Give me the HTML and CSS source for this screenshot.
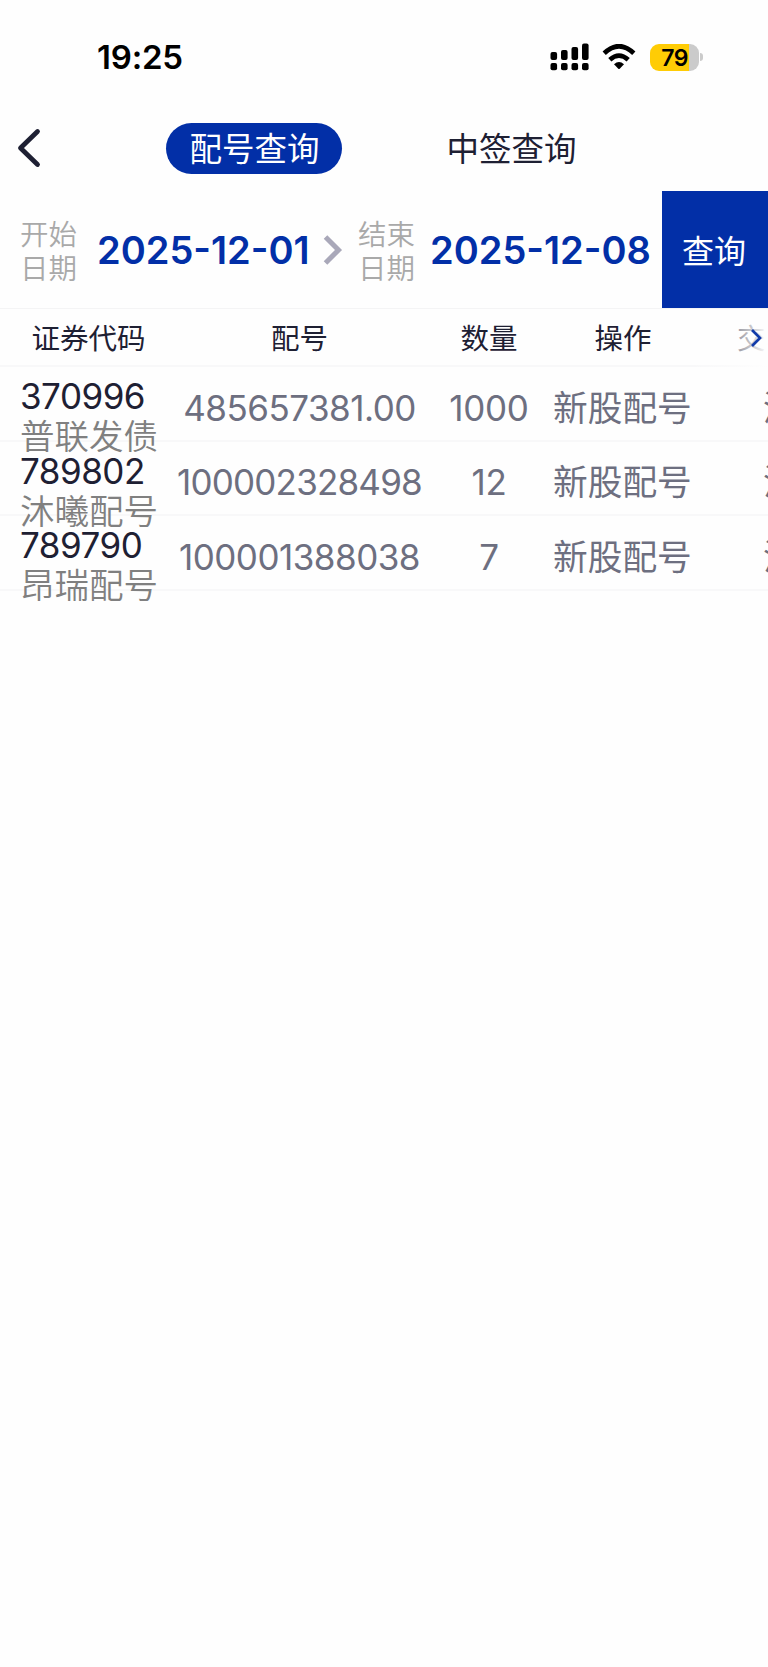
FILE: index.html
```html
<!DOCTYPE html>
<html lang="zh-CN">
<head>
<meta charset="utf-8">
<title>配号查询</title>
<link rel="stylesheet" href="styles.css">
</head>
<body>
<div class="status">
  <span class="time">19:25</span>
  <div class="status-icons">
    <svg class="signal" width="39" height="28" viewBox="0 0 39 28">
      <rect x="0.5" y="9" width="6.6" height="8" rx="2"/><rect x="11" y="7" width="6.6" height="10" rx="2"/><rect x="21.5" y="4" width="6.6" height="13" rx="2"/><rect x="32" y="0.5" width="6.6" height="16.5" rx="2"/>
      <rect x="0.5" y="20" width="6.6" height="7.3" rx="2"/><rect x="11" y="20" width="6.6" height="7.3" rx="2"/><rect x="21.5" y="20" width="6.6" height="7.3" rx="2"/><rect x="32" y="20" width="6.6" height="7.3" rx="2"/>
    </svg>
    <svg class="wifi" width="34" height="26" viewBox="0 0 34 26">
      <path d="M2.2 9.3Q17-4.8 31.800 9.300" fill="none" stroke="#000" stroke-width="4.700"/>
      <path d="M7.800 15.800Q17 7.500 26.200 15.800" fill="none" stroke="#000" stroke-width="4.700"/>
      <path d="M12 20.200Q17 15.800 22 20.200L17.700 24.800Q17 25.400 16.300 24.800Z"/>
    </svg>
    <div class="battery"><span>79</span></div>
    <i class="battery-tip"></i>
  </div>
</div>
<nav class="nav">
  <svg class="back" width="24" height="40" viewBox="0 0 24 40"><path d="M20.500 3.500L3.500 20L20.500 36.500" fill="none" stroke="#1e2033" stroke-width="4.800" stroke-linecap="round" stroke-linejoin="round"/></svg>
  <span class="tab active">配号查询</span>
  <span class="tab">中签查询</span>
</nav>
<div class="filter">
  <div class="label start">开始<br>日期</div>
  <div class="date from">2025-12-01</div>
  <svg class="arrow" width="20" height="30" viewBox="0 0 20 30"><path d="M2.500 2L15.500 15L2.500 28" fill="none" stroke="#a9a8b9" stroke-width="5"/></svg>
  <div class="label end">结束<br>日期</div>
  <div class="date to">2025-12-08</div>
  <button class="query">查询</button>
</div>
<main class="table">
  <div class="row head"><div>证券代码</div><div>配号</div><div>数量</div><div>操作</div><div>交易市场</div>
    <div class="more"><svg width="12" height="22" viewBox="0 0 12 22"><path d="M2 3L10 11L2 19" fill="none" stroke="#123ba9" stroke-width="2.700"/></svg></div>
  </div>
  <div class="row"><div class="security"><b>370996</b><span>普联发债</span></div><div class="amount">485657381.00</div><div>1000</div><div class="op">新股配号</div><div class="market">深市</div></div>
  <div class="row"><div class="security"><b>789802</b><span>沐曦配号</span></div><div class="number">100002328498</div><div>12</div><div class="op">新股配号</div><div class="market">沪市</div></div>
  <div class="row"><div class="security"><b>789790</b><span>昂瑞配号</span></div><div class="amount">100001388038</div><div>7</div><div class="op">新股配号</div><div class="market">沪市</div></div>
</main>
</body>
</html>
```
FILE: styles.css
```css
* { box-sizing: border-box; }
body { margin: 0; width: 768px; min-height: 1667px; background: #fefefe; color: #1e2033; font-family: Inter, "Noto Sans CJK SC", sans-serif; overflow-x: hidden; }
.status { height: 114px; display: flex; justify-content: space-between; padding: 37px 65px 0 97px; color: #000; }
.time { font-size: 33px; line-height: 41px; font-weight: 600; letter-spacing: -.2px; }
.status-icons { display: flex; height: 40px; align-items: center; }
.signal { margin-right: 13px; }
.wifi { margin-right: 14px; }
.battery { width: 49px; height: 27px; border-radius: 9px; background: linear-gradient(90deg, #ffcc05 39px, #cbcbcb 39px); font-size: 23px; font-weight: 600; line-height: 28px; text-align: center; letter-spacing: -.5px; }
.battery-tip { width: 3px; height: 8px; margin-left: 1px; border-radius: 0 3px 3px 0; background: #cbcbcb; }
.nav { height: 77px; display: flex; align-items: center; padding: 0 0 9px 17px; }
.tab { width: 176px; height: 51px; border-radius: 26px; font-size: 32.500px; line-height: 51px; padding-top: 1.500px; padding-left: 1px; text-align: center; }
.back { margin-right: 125px; }
.active { background: #022fa7; color: #fff; margin-right: 81px; }
.filter { height: 118px; display: flex; align-items: center; padding-left: 20px; border-bottom: 1px solid #f4f4f5; }
.label { width: 58px; padding-top: 5px; font-size: 28.500px; line-height: 34px; color: #a9a9a9; font-weight: 350; }
.date { font-size: 38px; font-weight: 600; color: #022fa7; white-space: nowrap; }
.from { width: 212px; margin-left: 19px; }
.arrow { margin: 0 14px; }
.end { margin-left: 1px; }
.to { width: 222px; margin-left: 14px; }
.query { align-self: stretch; width: 106px; margin-left: auto; padding: 0 2px 2px 0; border: 0; background: #022fa7; color: #fff; font: inherit; font-size: 32px; }
.row { width: 768px; height: 74.500px; display: grid; grid-template-columns: 177px 245px 134px 134px 78px; grid-template-rows: 100%; align-items: center; text-align: center; border-bottom: 2px solid #f8f8f9; font-size: 35px; letter-spacing: -.3px; line-height: 44px; color: #6d6f80; white-space: nowrap; padding-top: 9px; }
.head { position: relative; height: 58px; font-size: 28.500px; letter-spacing: 0; color: #1e2033; padding: 3px 0 0; }
.head div:nth-child(5) { padding-left: 47px; overflow: hidden; text-align: left; }
.amount { letter-spacing: -.5px; }
.number { letter-spacing: -.8px; }
.op { font-size: 34.700px; letter-spacing: 0; margin-left: -3px; }
.market { overflow: hidden; text-align: left; padding-left: 73px; }
.security { align-self: start; text-align: left; padding-left: 20px; }
.security b { display: block; font-weight: 400; font-size: 35px; letter-spacing: -.5px; line-height: 40px; color: #1e2033; }
.security span { display: block; font-size: 34.500px; letter-spacing: 0; line-height: 42px; color: #808080; font-weight: 350; }
.more { position: absolute; left: 690px; top: 0; width: 78px; height: 58px; display: flex; align-items: center; justify-content: flex-end; padding-right: 6px; background: linear-gradient(90deg, rgba(254,254,254,0), rgba(254,254,254,.6) 65%, #fefefe); }
```
